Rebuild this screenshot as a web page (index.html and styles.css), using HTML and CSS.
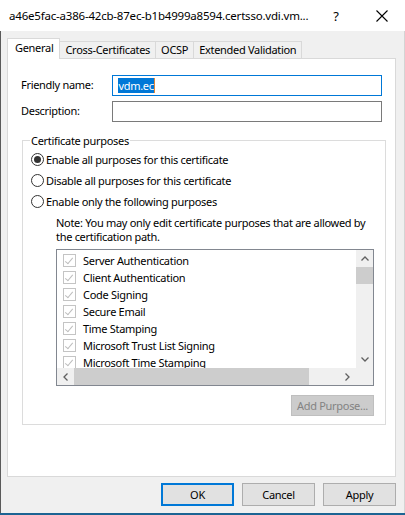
FILE: index.html
```html
<!DOCTYPE html>
<html lang="en">
<head>
  <meta charset="UTF-8">
  <meta name="viewport" content="width=device-width, initial-scale=1">
  <title>Certificate Properties</title>
  <link rel="stylesheet" href="styles.css">
</head>
<body>
  <div class="window">
    <div class="titlebar">
      <span class="title">a46e5fac-a386-42cb-87ec-b1b4999a8594.certsso.vdi.vm...</span>
      <span class="help">?</span>
      <svg class="close" width="12" height="12" viewBox="0 0 12 12">
        <path d="M0.5 0.5L11.5 11.5M11.5 0.5L0.5 11.5" stroke="#000" stroke-width="1.1" fill="none"/>
      </svg>
    </div>

    <div class="dialog">
      <div class="tabs">
        <div class="tab active">General</div>
        <div class="tab">Cross-Certificates</div>
        <div class="tab">OCSP</div>
        <div class="tab">Extended Validation</div>
      </div>

      <div class="panel">
        <div class="field">
          <label>Friendly name:</label>
          <div class="input focus"><span class="sel">vdm.ec</span><span class="caret"></span></div>
        </div>
        <div class="field">
          <label>Description:</label>
          <div class="input"></div>
        </div>

        <fieldset class="group">
          <legend>Certificate purposes</legend>
          <div class="radio checked"><span class="dot"></span>Enable all purposes for this certificate</div>
          <div class="radio"><span class="dot"></span>Disable all purposes for this certificate</div>
          <div class="radio"><span class="dot"></span>Enable only the following purposes</div>

          <div class="indent">
            <p class="note">Note: You may only edit certificate purposes that are allowed by the certification path.</p>

            <div class="listbox">
              <div class="items">
                <div class="item"><span class="check"></span>Server Authentication</div>
                <div class="item"><span class="check"></span>Client Authentication</div>
                <div class="item"><span class="check"></span>Code Signing</div>
                <div class="item"><span class="check"></span>Secure Email</div>
                <div class="item"><span class="check"></span>Time Stamping</div>
                <div class="item"><span class="check"></span>Microsoft Trust List Signing</div>
                <div class="item"><span class="check"></span>Microsoft Time Stamping</div>
              </div>
              <div class="vscroll">
                <svg class="arrow" width="8" height="5" viewBox="0 0 8 5"><path d="M0.5 4.5L4 1L7.5 4.5" stroke="#606060" stroke-width="1.3" fill="none"/></svg>
                <div class="vthumb"></div>
                <div class="track"></div>
                <svg class="arrow" width="8" height="5" viewBox="0 0 8 5"><path d="M0.5 0.5L4 4L7.5 0.5" stroke="#606060" stroke-width="1.3" fill="none"/></svg>
              </div>
              <div class="hscroll">
                <svg class="arrow" width="5" height="8" viewBox="0 0 5 8"><path d="M4.5 0.5L1 4L4.5 7.5" stroke="#606060" stroke-width="1.3" fill="none"/></svg>
                <div class="hthumb"></div>
                <div class="track"></div>
                <svg class="arrow" width="5" height="8" viewBox="0 0 5 8"><path d="M0.5 0.5L4 4L0.5 7.5" stroke="#606060" stroke-width="1.3" fill="none"/></svg>
              </div>
              <div class="corner"></div>
            </div>

            <div class="add-row">
              <button class="btn disabled">Add Purpose...</button>
            </div>
          </div>
        </fieldset>
      </div>

      <div class="buttons">
        <button class="btn default">OK</button>
        <button class="btn">Cancel</button>
        <button class="btn">Apply</button>
      </div>
    </div>
  </div>
</body>
</html>
```

FILE: styles.css
```css
* {
  box-sizing: border-box;
}

body {
  margin: 0;
  font-family: "Noto Sans", "Segoe UI", sans-serif;
  font-size: 11px;
  letter-spacing: -0.3px;
  color: #000;
  background-color: #f0f0f0;
}

.window {
  width: 405px;
  height: 515px;
  display: flex;
  flex-direction: column;
  border-bottom: 2px solid #1c6493;
}

.titlebar {
  height: 31px;
  flex-shrink: 0;
  display: flex;
  align-items: center;
  background-color: #fff;
  padding-left: 9px;
  font-size: 11.5px;
  letter-spacing: -0.2px;
}

.title {
  flex: 1;
  white-space: nowrap;
}

.help {
  width: 40px;
  text-align: center;
  font-size: 13px;
}

.close {
  margin: 0 17px 0 20px;
}

.dialog {
  flex: 1;
  border-left: 1px solid #5a5a5a;
  border-right: 1px solid #d4d4d4;
  padding: 7px 8px 0 6px;
}

/* tabs */
.tabs {
  display: flex;
  align-items: flex-end;
  height: 20px;
  position: relative;
  z-index: 1;
}

.tab {
  height: 17px;
  line-height: 16px;
  padding: 0 5px;
  background-color: #f0f0f0;
  border: 1px solid #d9d9d9;
  border-bottom: none;
  margin-left: -1px;
  white-space: nowrap;
}

.tab.active {
  height: 21px;
  line-height: 18px;
  margin-left: 0;
  margin-bottom: -1px;
  padding: 0 6px 0 7px;
  background-color: #fff;
}

.panel {
  height: 419px;
  background-color: #fff;
  border: 1px solid #d9d9d9;
  padding: 16px 13px 0 13px;
}

/* name fields */
.field {
  display: flex;
  align-items: center;
  margin-bottom: 5px;
}

.field label {
  width: 92px;
  margin-top: -2px;
}

.input {
  width: 271px;
  height: 21px;
  border: 1px solid #7a7a7a;
  padding: 2px 5px;
  display: flex;
  align-items: center;
}

.input.focus {
  border-color: #0078d7;
}

.sel {
  background-color: #0078d7;
  color: #fff;
  line-height: 15px;
}

.caret {
  width: 1px;
  height: 15px;
  background-color: #e0883a;
}

/* group box */
.group {
  margin: 11px 0 0 1px;
  width: 364px;
  height: 292px;
  border: 1px solid #dcdcdc;
  padding: 0 0 0 8px;
}

.group legend {
  margin-left: -1px;
  padding: 0 1px;
}

.radio {
  display: flex;
  align-items: center;
  height: 21px;
}

.radio:first-of-type {
  margin-top: 1px;
}

.dot {
  width: 13px;
  height: 13px;
  border: 1px solid #333;
  border-radius: 50%;
  margin-right: 2px;
  display: flex;
  align-items: center;
  justify-content: center;
}

.radio.checked .dot::after {
  content: "";
  width: 7px;
  height: 7px;
  border-radius: 50%;
  background-color: #333;
}

.indent {
  padding-left: 25px;
}

.note {
  max-width: 318px;
  margin: 4px 0 5px 0;
  line-height: 14px;
}

/* list with scrollbars */
.listbox {
  width: 318px;
  height: 137px;
  border: 1px solid #828790;
  display: grid;
  grid-template-columns: 1fr 17px;
  grid-template-rows: 1fr 17px;
  background-color: #fff;
}

.items {
  overflow: hidden;
  padding: 2px 0 0 6px;
}

.item {
  height: 17px;
  display: flex;
  align-items: center;
  white-space: nowrap;
}

.check {
  width: 13px;
  height: 13px;
  border: 1px solid #c4c4c4;
  margin-right: 7px;
  position: relative;
}

.check::after {
  content: "";
  position: absolute;
  left: 3px;
  top: 1px;
  width: 3px;
  height: 7px;
  border: solid #bdbdbd;
  border-width: 0 1px 1px 0;
  transform: rotate(40deg);
}

.vscroll,
.hscroll,
.corner {
  background-color: #f0f0f0;
}

.vscroll {
  display: flex;
  flex-direction: column;
  align-items: center;
}

.vscroll .arrow {
  margin: 6px 0;
}

.vthumb {
  width: 17px;
  height: 17px;
  background-color: #cdcdcd;
}

.hscroll {
  display: flex;
  align-items: center;
}

.hscroll .arrow {
  margin: 0 6px;
}

.hthumb {
  width: 235px;
  height: 17px;
  background-color: #cdcdcd;
}

.track {
  flex: 1;
}

.add-row {
  display: flex;
  justify-content: flex-end;
  width: 318px;
  margin-top: 9px;
}

/* buttons */
.btn {
  font-family: inherit;
  font-size: 11px;
  letter-spacing: -0.3px;
  height: 23px;
  min-width: 73px;
  background-color: #e1e1e1;
  border: 1px solid #adadad;
  padding: 0 6px;
  color: #000;
  white-space: nowrap;
}

.btn.default {
  border: 2px solid #0078d7;
}

.btn.disabled {
  height: 21px;
  width: 83px;
  background-color: #cccccc;
  border-color: #bfbfbf;
  color: #838383;
  padding: 0;
}

.buttons {
  display: flex;
  justify-content: flex-end;
  gap: 8px;
  margin-top: 6px;
}
```
